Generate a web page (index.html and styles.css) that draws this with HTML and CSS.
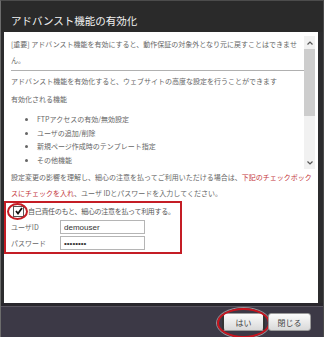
FILE: index.html
```html
<!DOCTYPE html>
<html>
<head>
  <meta charset="UTF-8">
  <title>アドバンスト機能の有効化</title>
  <link rel="stylesheet" href="styles.css">
</head>
<body>
  <div class="dialog">
    <div class="titlebar">アドバンスト機能の有効化</div>

    <div class="panel">
      <!-- scrollable description -->
      <div class="scroll-box">
        <div class="scroll-text">
          <p>[重要] アドバンスト機能を有効にすると、動作保証の対象外となり元に戻すことはできません。</p>
          <hr>
          <p class="gap">アドバンスト機能を有効化すると、ウェブサイトの高度な設定を行うことができます</p>
          <p class="gap">有効化される機能</p>
          <ul class="feature-list">
            <li>FTPアクセスの有効/無効設定</li>
            <li>ユーザの追加/削除</li>
            <li>新規ページ作成時のテンプレート指定</li>
            <li>その他機能</li>
          </ul>
        </div>
        <div class="scrollbar">
          <span class="sb-btn">
            <svg width="6" height="4" viewBox="0 0 6 4"><polyline points="0.5,3.5 3,1 5.5,3.5" fill="none" stroke="#555" stroke-width="1.2"/></svg>
          </span>
          <div class="sb-track"><div class="sb-thumb"></div></div>
          <span class="sb-btn">
            <svg width="6" height="4" viewBox="0 0 6 4"><polyline points="0.5,0.5 3,3 5.5,0.5" fill="none" stroke="#555" stroke-width="1.2"/></svg>
          </span>
        </div>
      </div>

      <p class="confirm-text">設定変更の影響を理解し、細心の注意を払ってご利用いただける場合は、<span class="warn">下記のチェックボックスにチェックを入れ</span>、ユーザ IDとパスワードを入力してください。</p>

      <div class="auth-box">
        <label class="agree-row">
          <span class="check">
            <svg width="8" height="8" viewBox="0 0 8 8"><polyline points="1,4 3,6.5 7,1" fill="none" stroke="#111" stroke-width="1.8"/></svg>
            <span class="mark-circle"></span>
          </span>
          <span class="agree-text">自己責任のもと、細心の注意を払って利用する。</span>
        </label>
        <div class="field-row">
          <label for="userId">ユーザID</label>
          <input id="userId" type="text" value="demouser">
        </div>
        <div class="field-row">
          <label for="userPass">パスワード</label>
          <input id="userPass" type="password" value="demopass">
        </div>
      </div>
    </div>

    <div class="footer">
      <button class="btn btn-yes">はい<span class="mark-ellipse"></span></button>
      <button class="btn">閉じる</button>
    </div>
  </div>
</body>
</html>
```

FILE: styles.css
```css
body {
  margin: 0;
  background-color: #2c2c2e;
  font-family: "Noto Sans CJK JP", "Noto Sans", sans-serif;
  overflow: hidden;
}
.dialog {
  box-sizing: border-box;
  width: 324px;
  height: 337px;
  display: flex;
  flex-direction: column;
  border-left: 1px solid #6c6c6c;
  border-right: 1px solid #4a4a4a;
  border-top: 1px solid #4c4c4c;
  background-color: #2c2c2e;
}
.titlebar {
  height: 31px;
  box-sizing: border-box;
  padding: 7px 0 0 10px;
  display: flex;
  align-items: center;
  font-size: 10.5px;
  color: #f2f2f2;
  background-color: #2a2a2a;
}
.panel {
  flex: 1;
  margin: 0 5px 0 3px;
  background-color: #fff;
  display: flex;
  flex-direction: column;
  color: #666;
  font-size: 7px;
}
/* scroll area */
.scroll-box {
  height: 137px;
  box-sizing: border-box;
  padding: 4px 3px 0 7px;
  display: flex;
}
.scroll-text {
  flex: 1;
  overflow: hidden;
}
.scroll-text p {
  margin: 0;
  line-height: 16px;
}
.scroll-text p.gap {
  margin-top: 2px;
}
.scroll-text hr {
  margin: 2px 0 2px 0;
  border: none;
  border-top: 1px solid #b0b0b0;
}
.feature-list {
  margin: 6px 0 0 0;
  padding-left: 26px;
  line-height: 13.7px;
}
.scrollbar {
  width: 11px;
  display: flex;
  flex-direction: column;
  background-color: #f1f1f1;
}
.sb-btn {
  height: 13px;
  display: flex;
  align-items: center;
  justify-content: center;
}
.sb-track {
  flex: 1;
}
.sb-thumb {
  height: 67px;
  background-color: #cdcdcd;
}
.confirm-text {
  margin: 0;
  padding: 0 4px 0 7px;
  line-height: 16px;
}
.warn {
  color: #c4363c;
}
/* red framed auth area */
.auth-box {
  width: 178px;
  box-sizing: border-box;
  border: 2px solid #c41d25;
  padding: 1px 2px 2px 5px;
  display: flex;
  flex-direction: column;
  gap: 2px;
}
.agree-row {
  display: flex;
  align-items: center;
  height: 14px;
  color: #555;
  white-space: nowrap;
}
.agree-text {
  letter-spacing: -0.3px;
}
.check {
  position: relative;
  flex-shrink: 0;
  width: 9px;
  height: 9px;
  margin: 0 4px 0 2px;
  border: 1px solid #555;
  background-color: #fff;
  display: flex;
  align-items: center;
  justify-content: center;
}
.mark-circle {
  position: absolute;
  left: -7px;
  top: -4px;
  width: 17px;
  height: 13px;
  border: 2px solid #c41d25;
  border-radius: 50%;
}
.field-row {
  display: flex;
  align-items: center;
  height: 14px;
}
.field-row label {
  width: 49px;
  color: #666;
}
.field-row input {
  width: 85px;
  height: 14px;
  box-sizing: border-box;
  margin: 0;
  padding: 0 3px;
  border: 1px solid #b5b5b5;
  font-family: "Liberation Sans", Arial, sans-serif;
  font-size: 8px;
  color: #333;
}
/* bottom button bar */
.footer {
  height: 34px;
  box-sizing: border-box;
  border-top: 3px solid #29272d;
  box-shadow: inset 0 1px 0 #59555f;
  background-color: #3c3946;
  display: flex;
  justify-content: flex-end;
  align-items: flex-start;
  gap: 3px;
  padding: 7px 12px 0 0;
}
.btn {
  position: relative;
  width: 43px;
  height: 18px;
  padding: 0;
  border: 1px solid #9a9a9a;
  border-radius: 3px;
  background: linear-gradient(#fbfbfb, #d9d9d9);
  font-family: "Noto Sans CJK JP", sans-serif;
  font-size: 8px;
  color: #444;
}
.btn-yes {
  border-left: 2px solid #333;
  border-right: 2px solid #333;
}
.mark-ellipse {
  position: absolute;
  left: -7px;
  top: -6px;
  width: 49px;
  height: 26px;
  border: 2px solid #c8141e;
  border-radius: 50%;
  box-shadow: 0 0 0 1px rgba(255,255,255,0.45);
}
```
